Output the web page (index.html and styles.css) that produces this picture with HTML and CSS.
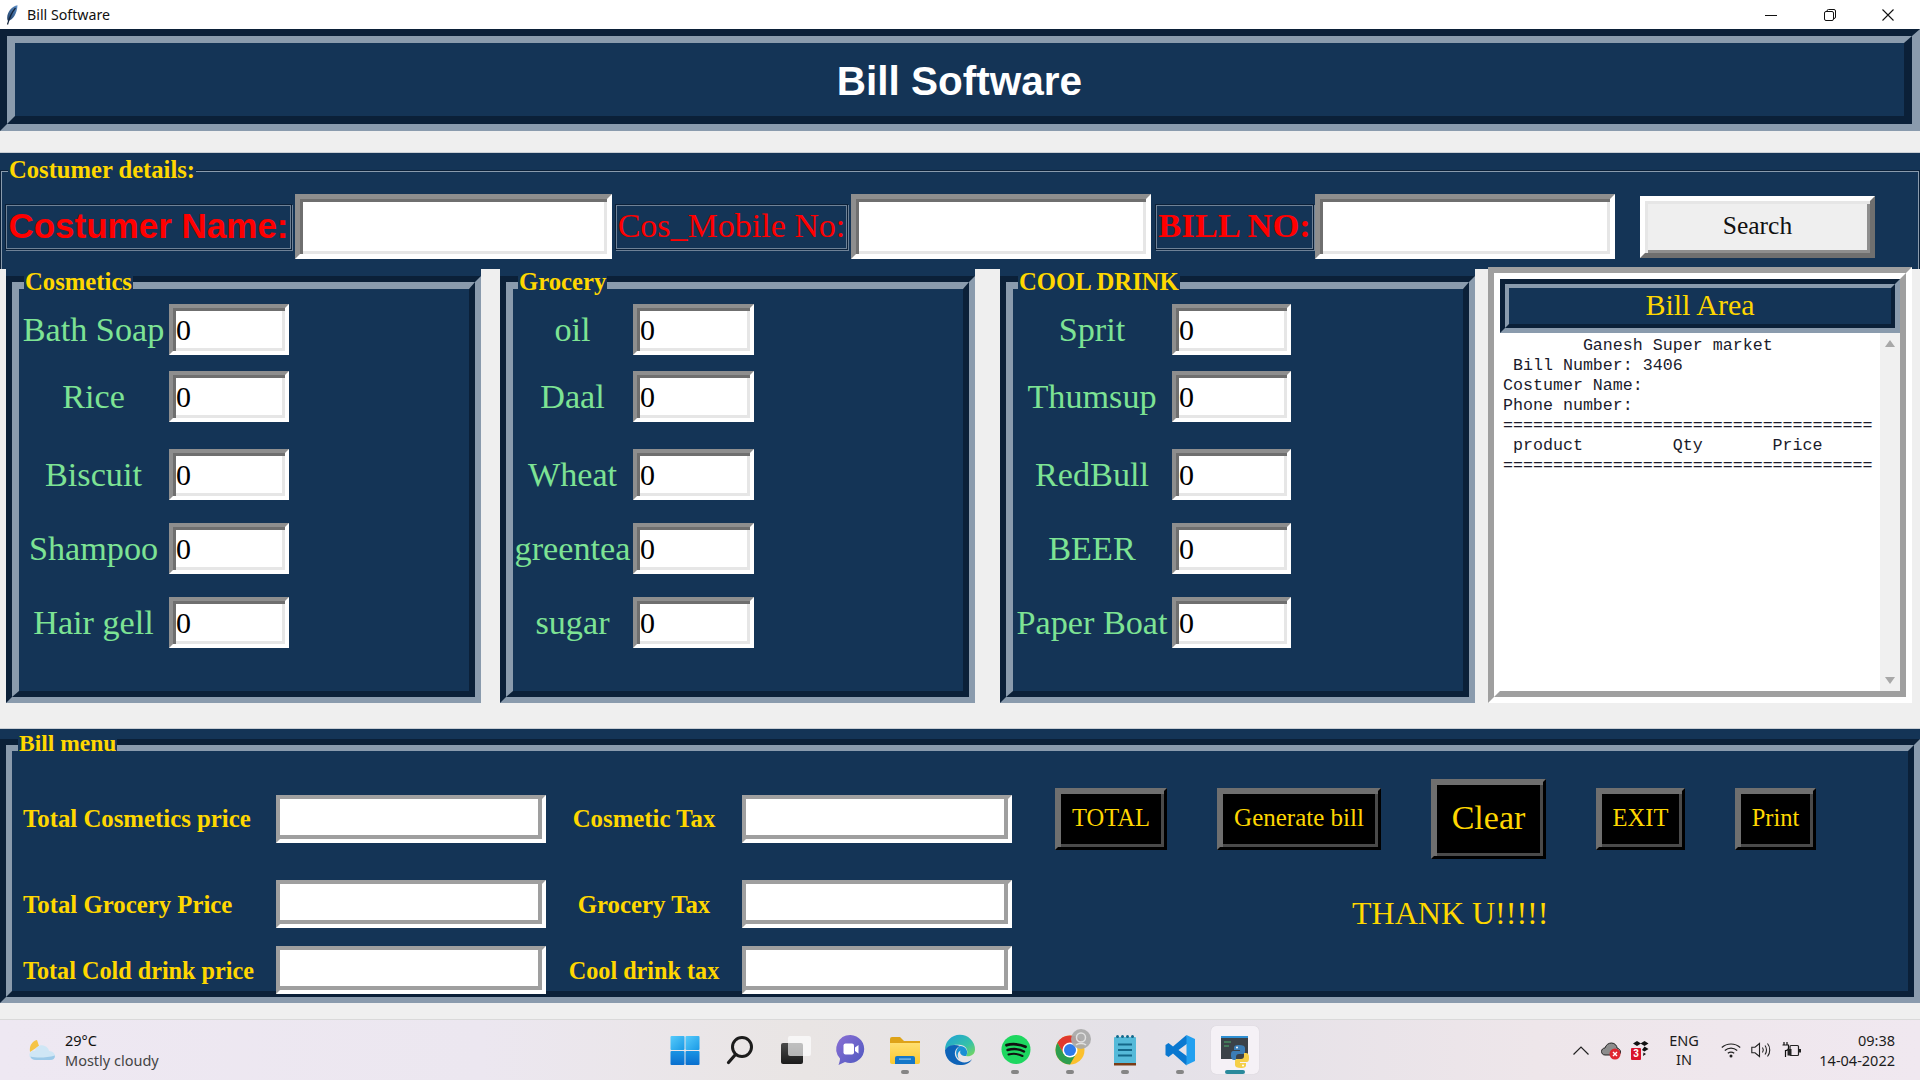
FILE: index.html
```html
<!DOCTYPE html>
<html lang="en">
<head>
<meta charset="utf-8">
<title>Bill Software</title>
<link rel="stylesheet" href="styles.css">
</head>
<body>
<div class="screen">
  <div class="titlebar">
    <div class="title-left">
      <svg class="feather" width="12" height="20" viewBox="0 0 12 20"><defs><linearGradient id="fe" x1="1" y1="0" x2="0" y2="1"><stop offset="0" stop-color="#5d8fc9"/><stop offset="1" stop-color="#1f3f66"/></linearGradient></defs><path d="M11.500 0.300C6 1.500 1.500 6.500 1.200 12.500C1.100 14 1.500 15.500 2.200 16C7 15 11 9 11.500 0.300Z" fill="url(#fe)"/><path d="M9.500 3C6 7 3.500 12 1.500 19.500" stroke="#14243a" stroke-width="1.200" fill="none"/></svg>
      <span class="title-text">Bill Software</span>
    </div>
    <div class="win-controls">
      <svg width="12" height="12" viewBox="0 0 12 12"><path d="M0 6.500H12" stroke="#111" stroke-width="1"/></svg>
      <svg width="12" height="12" viewBox="0 0 12 12"><rect x="0.500" y="2.500" width="9" height="9" rx="1.500" fill="none" stroke="#111"/><path d="M3 2.500V2A1.500 1.500 0 0 1 4.500 .5H10A1.500 1.500 0 0 1 11.500 2V8A1.500 1.500 0 0 1 10 9.500" fill="none" stroke="#111"/></svg>
      <svg width="12" height="12" viewBox="0 0 12 12"><path d="M0.500 0.500L11.500 11.500M11.500 0.500L0.500 11.500" stroke="#111" stroke-width="1.100"/></svg>
    </div>
  </div>

  <header class="groove header">
    <div class="groove-in header-in"><h1 class="app-title">Bill Software</h1></div>
  </header>

  <div class="gray-gap"></div>

  <section class="customer">
    <div class="customer-frame">
      <span class="legend legend-customer">Costumer details:</span>
      <div class="customer-row">
        <label class="cust-label cust-name">Costumer Name:</label>
        <input class="cust-input cust-input-1" type="text">
        <label class="cust-label cust-mobile">Cos_Mobile No:</label>
        <input class="cust-input cust-input-2" type="text">
        <label class="cust-label cust-bill">BILL NO:</label>
        <input class="cust-input cust-input-3" type="text">
        <button class="search-btn">Search</button>
      </div>
    </div>
  </section>

  <section class="products">
    <div class="product-frame pf-cosmetics">
      <span class="legend legend-frame">Cosmetics</span>
      <div class="groove"><div class="groove-in frame-in">
        <div class="item-grid grid-cosmetics">
          <label class="item-label">Bath Soap</label><input class="item-entry" value="0">
          <label class="item-label">Rice</label><input class="item-entry" value="0">
          <label class="item-label">Biscuit</label><input class="item-entry" value="0">
          <label class="item-label">Shampoo</label><input class="item-entry" value="0">
          <label class="item-label">Hair gell</label><input class="item-entry" value="0">
        </div>
      </div></div>
    </div>
    <div class="product-frame pf-grocery">
      <span class="legend legend-frame">Grocery</span>
      <div class="groove"><div class="groove-in frame-in">
        <div class="item-grid grid-grocery">
          <label class="item-label">oil</label><input class="item-entry" value="0">
          <label class="item-label">Daal</label><input class="item-entry" value="0">
          <label class="item-label">Wheat</label><input class="item-entry" value="0">
          <label class="item-label">greentea</label><input class="item-entry" value="0">
          <label class="item-label">sugar</label><input class="item-entry" value="0">
        </div>
      </div></div>
    </div>
    <div class="product-frame pf-drink">
      <span class="legend legend-frame">COOL DRINK</span>
      <div class="groove"><div class="groove-in frame-in">
        <div class="item-grid grid-drink">
          <label class="item-label">Sprit</label><input class="item-entry" value="0">
          <label class="item-label">Thumsup</label><input class="item-entry" value="0">
          <label class="item-label">RedBull</label><input class="item-entry" value="0">
          <label class="item-label">BEER</label><input class="item-entry" value="0">
          <label class="item-label">Paper Boat</label><input class="item-entry" value="0">
        </div>
      </div></div>
    </div>
    <div class="bill-frame">
      <div class="bill-frame-in">
        <div class="bill-head"><div class="bill-head-in">Bill Area</div></div>
        <div class="bill-body">
<pre class="bill-text">        Ganesh Super market
 Bill Number: 3406
Costumer Name:
Phone number:
=====================================
 product         Qty       Price
=====================================</pre>
          <div class="scrollbar">
            <svg width="10" height="8" viewBox="0 0 10 8"><path d="M5 0L10 7H0Z" fill="#a8a8a8"/></svg>
            <svg width="10" height="8" viewBox="0 0 10 8"><path d="M0 1H10L5 8Z" fill="#a8a8a8"/></svg>
          </div>
        </div>
      </div>
    </div>
  </section>

  <section class="menu">
    <span class="legend legend-menu">Bill menu</span>
    <div class="groove"><div class="groove-in menu-in">
      <div class="totals">
        <label class="total-label">Total Cosmetics price</label><input class="total-entry" type="text">
        <label class="tax-label">Cosmetic Tax</label><input class="total-entry" type="text">
        <label class="total-label low">Total Grocery Price</label><input class="total-entry" type="text">
        <label class="tax-label low">Grocery Tax</label><input class="total-entry" type="text">
        <label class="total-label low cold">Total Cold drink price</label><input class="total-entry" type="text">
        <label class="tax-label low cold">Cool drink tax</label><input class="total-entry" type="text">
      </div>
      <div class="actions">
        <div class="action-row">
          <button class="action action-total">TOTAL</button>
          <button class="action action-generate">Generate bill</button>
          <button class="action action-clear">Clear</button>
          <button class="action action-exit">EXIT</button>
          <button class="action action-print">Print</button>
        </div>
        <div class="thanks">THANK U!!!!!</div>
      </div>
    </div></div>
  </section>

  <div class="gray-foot"></div>

  <footer class="taskbar">
    <div class="weather">
      <svg class="weather-icon" width="28" height="24" viewBox="0 0 28 24"><path d="M2 14C1 8 4 3 9 2L11 8Z" fill="#f6c445"/><path d="M8 22C3 22 1 19 1.500 16C2 13.500 5 12 7 13C8 8 13 6 17 8C20 9.500 21 12 21 13C25 13 27 16 27 18C27 20.500 25 22 22 22Z" fill="#cfe6f5"/><path d="M8 22C5 22 3 20.500 2.500 18.500C8 20 18 20 27 17.500C27 20.500 25 22 22 22Z" fill="#9cc9e8"/></svg>
      <div class="weather-text">
        <span class="temp">29°C</span>
        <span class="cond">Mostly cloudy</span>
      </div>
    </div>
    <div class="apps">
      <div class="app">
        <svg width="40" height="40" viewBox="0 0 40 40"><defs><linearGradient id="w1" x1="0" y1="0" x2="1" y2="1"><stop offset="0" stop-color="#57cbfb"/><stop offset="1" stop-color="#1a9ae6"/></linearGradient><linearGradient id="w2" x1="0" y1="0" x2="0" y2="1"><stop offset="0" stop-color="#1994e4"/><stop offset="1" stop-color="#0a6fce"/></linearGradient></defs><rect x="5.500" y="6" width="14" height="14" rx="1" fill="url(#w1)"/><rect x="20.500" y="6" width="14" height="14" rx="1" fill="url(#w1)"/><rect x="5.500" y="21" width="14" height="14" rx="1" fill="url(#w2)"/><rect x="20.500" y="21" width="14" height="14" rx="1" fill="url(#w2)"/></svg>
      </div>
      <div class="app">
        <svg width="40" height="40" viewBox="0 0 40 40"><circle cx="22" cy="17" r="9.500" fill="none" stroke="#1c1c1c" stroke-width="3"/><path d="M15.500 24.500L8.500 32.500" stroke="#1c1c1c" stroke-width="3.200" stroke-linecap="round"/></svg>
      </div>
      <div class="app">
        <svg width="40" height="40" viewBox="0 0 40 40"><defs><linearGradient id="t1" x1="0" y1="0" x2="0" y2="1"><stop offset="0" stop-color="#4a4a4a"/><stop offset="1" stop-color="#1b1b1b"/></linearGradient></defs><rect x="6" y="13" width="22" height="21" rx="2" fill="url(#t1)"/><rect x="13" y="6" width="23" height="20" rx="2" fill="#fff" fill-opacity=".65"/></svg>
      </div>
      <div class="app">
        <svg width="40" height="40" viewBox="0 0 40 40"><defs><linearGradient id="c1" x1="0" y1="0" x2="1" y2="1"><stop offset="0" stop-color="#8a6fd4"/><stop offset="1" stop-color="#4e58c0"/></linearGradient></defs><path d="M20.500 5A14 14 0 1 1 15 32L8.500 35C9.500 32 10 30 10 28.500A14 14 0 0 1 20.500 5Z" fill="url(#c1)"/><rect x="13.500" y="13.500" width="10.500" height="11" rx="2" fill="#fff"/><path d="M25 17.500L28.500 15V23.500L25 21Z" fill="#fff"/></svg>
      </div>
      <div class="app">
        <svg width="40" height="40" viewBox="0 0 40 40"><defs><linearGradient id="f1" x1="0" y1="0" x2="0" y2="1"><stop offset="0" stop-color="#ffdf70"/><stop offset="1" stop-color="#fbc92f"/></linearGradient></defs><path d="M5 9A2 2 0 0 1 7 7H15L19 11H35V16H5Z" fill="#dea318"/><path d="M5 13H35V32A2 2 0 0 1 33 34H7A2 2 0 0 1 5 32Z" fill="url(#f1)"/><path d="M10 28A2 2 0 0 1 12 26H28A2 2 0 0 1 30 28V34H10Z" fill="#1477c8"/><rect x="14" y="28.500" width="12" height="1.200" fill="#8cc6ee"/></svg>
        <span class="running"></span>
      </div>
      <div class="app">
        <svg width="40" height="40" viewBox="0 0 40 40"><defs><linearGradient id="e1" x1="0" y1="0" x2="1" y2="1"><stop offset="0" stop-color="#1ea0d8"/><stop offset=".6" stop-color="#35c1a8"/><stop offset="1" stop-color="#7ed957"/></linearGradient></defs><path d="M5 20A15 15 0 0 1 35 19.500C35 25 30 27 26 26C29 22 27 16 21 15C14 14 8 16 5 20Z" fill="url(#e1)"/><path d="M5 20C8 15 14 14 20 16C15 18 13 24 17 29C21 34 29 33 32 29C30 33 26 35 20 35C11 35 5 28 5 20Z" fill="#0e63b8"/><path d="M20 16C26 16 29 22 26 26C22 26 19 24 20.500 20.500C17.500 22 17 26 19 29C15 26 15 19 20 16Z" fill="#1a8fd4"/></svg>
      </div>
      <div class="app">
        <svg width="40" height="40" viewBox="0 0 40 40"><circle cx="21" cy="19.500" r="14.500" fill="#1ed760"/><path d="M11.500 15.200C17 13.500 25 14 30.500 16.800" fill="none" stroke="#111" stroke-width="2.800" stroke-linecap="round"/><path d="M12.500 20C17.500 18.700 24.500 19 29 21.500" fill="none" stroke="#111" stroke-width="2.400" stroke-linecap="round"/><path d="M13.500 24.500C18 23.500 23.500 23.800 27.500 26" fill="none" stroke="#111" stroke-width="2" stroke-linecap="round"/></svg>
        <span class="running"></span>
      </div>
      <div class="app">
        <svg width="40" height="40" viewBox="0 0 40 40"><circle cx="20" cy="20" r="14.500" fill="#fbc02d"/><path d="M20 5.500A14.500 14.500 0 0 0 7.400 12.800L13.500 23.500L20 13H32.600A14.500 14.500 0 0 0 20 5.500Z" fill="#e0382e"/><path d="M7.400 12.800A14.500 14.500 0 0 0 20 34.500L26 24L13.500 23.500Z" fill="#2e9e4f"/><circle cx="20" cy="20" r="7.500" fill="#fff"/><circle cx="20" cy="20" r="6" fill="#2f7bea"/><circle cx="31" cy="9" r="10" fill="#a9a9a9" fill-opacity=".92"/><circle cx="31" cy="7.500" r="4.500" fill="none" stroke="#e0e0e0" stroke-width="1.500"/><path d="M26 15C28 13 34 13 36 15" fill="none" stroke="#e0e0e0" stroke-width="1.500"/></svg>
        <span class="running"></span>
      </div>
      <div class="app">
        <svg width="40" height="40" viewBox="0 0 40 40"><rect x="9" y="7" width="22" height="26.500" rx="1" fill="#55bad9"/><rect x="9" y="33" width="22" height="2.500" fill="#7a3c16"/><g fill="#14688a"><circle cx="12.500" cy="6.500" r="1.500"/><circle cx="17.500" cy="6.500" r="1.500"/><circle cx="22.500" cy="6.500" r="1.500"/><circle cx="27.500" cy="6.500" r="1.500"/><rect x="13" y="13.500" width="14" height="2"/><rect x="13" y="19" width="14" height="2"/><rect x="13" y="24.500" width="14" height="2"/></g></svg>
        <span class="running"></span>
      </div>
      <div class="app">
        <svg width="40" height="40" viewBox="0 0 40 40"><path d="M13 16.500L8.500 13L5.500 15V25L8.500 27L13 23.500L26.500 35.500L28 27L18.500 20L28 13L26.500 5Z" fill="#0a78d0"/><path d="M26.500 5L35 9V31L26.500 35Z" fill="#22a0f0"/></svg>
        <span class="running"></span>
      </div>
      <div class="app app-active">
        <svg width="40" height="40" viewBox="0 0 40 40"><rect x="6" y="6" width="27" height="23" fill="#3b4248"/><rect x="6" y="6" width="27" height="2" fill="#2f8fd3"/><path d="M9 12H16M9 16H14" stroke="#4caf6a" stroke-width="1"/><path d="M24 15C20 15 19 16 19 18V20H25V21H18C16 21 16 24 16 26C16 28 17 30 19 30H21V27C21 25 22 24 24 24H28C30 24 30 23 30 21V18C30 16 28 15 24 15Z" fill="#3b7db5"/><circle cx="22" cy="17.500" r="1" fill="#fff"/><path d="M26 38C30 38 31 37 31 35V33H25V32H32C34 32 34 29 34 27C34 25 33 23 31 23H29V26C29 28 28 29 26 29H22C20 29 20 30 20 32V35C20 37 22 38 26 38Z" fill="#f5cf47"/><circle cx="28" cy="35.500" r="1" fill="#fff"/></svg>
        <span class="running running-active"></span>
      </div>
    </div>
    <div class="tray">
      <svg class="t-chevron" width="16" height="9" viewBox="0 0 16 9"><path d="M0.500 8.500L8 1L15.500 8.500" fill="none" stroke="#222" stroke-width="1.200"/></svg>
      <svg class="t-cloud" width="20" height="19" viewBox="0 0 20 19"><path d="M4 14C1.500 14 .5 12 .5 10.500C.5 8.500 2 7 4 7C5 3.500 8 2 10.500 2C14 2 16 5 16 7C18 7.500 19.500 9 19.500 11C19.500 13 18 14 16 14Z" fill="#8c8c8c" stroke="#222" stroke-width="1"/><circle cx="14" cy="13" r="5.500" fill="#e0262f"/><path d="M12 11L16 15M16 11L12 15" stroke="#fff" stroke-width="1.400"/></svg>
      <div class="t-box">
        <svg width="19" height="19" viewBox="0 0 19 19"><path d="M6 0L10 2.500L6 5L2 2.500ZM13.500 0L17.500 2.500L13.500 5L9.500 2.500ZM13.500 5.500L17.500 8L13.500 10.500L11 9ZM12.500 11.500L15 13L12 15Z" fill="#111"/></svg>
        <span class="badge-3">3</span>
      </div>
      <div class="t-lang"><span>ENG</span><span>IN</span></div>
      <svg class="t-wifi" width="20" height="16" viewBox="0 0 20 16"><path d="M.8 5.500C6 .8 14 .8 19.200 5.500M3.800 8.500C7.500 5.300 12.500 5.300 16.200 8.500M6.800 11.300C8.800 9.800 11.200 9.800 13.200 11.300" fill="none" stroke="#222" stroke-width="1.200"/><circle cx="10" cy="14" r="1.500" fill="#222"/></svg>
      <svg class="t-vol" width="20" height="16" viewBox="0 0 20 16"><path d="M.8 5.200H4L8.500 1.500V14.500L4 10.800H.8Z" fill="none" stroke="#222" stroke-width="1.100"/><path d="M11.500 5.500C12.500 7 12.500 9 11.500 10.500M14 3.500C16 6 16 10 14 12.500M16.500 1.500C19.500 5 19.500 11 16.500 14.500" fill="none" stroke="#222" stroke-width="1.100"/></svg>
      <svg class="t-batt" width="19" height="16" viewBox="0 0 19 16"><path d="M2 0V3M5 0V3M.5 3H6.500V6C6.500 7.500 5 8.500 3.500 8.500V15" fill="none" stroke="#111" stroke-width="1.200"/><rect x="8" y="3.500" width="8.500" height="10" rx="1" fill="none" stroke="#222" stroke-width="1.200"/><rect x="5.500" y="7" width="4" height="6.500" fill="#222"/><rect x="17" y="7" width="2" height="3.500" fill="#222"/></svg>
      <div class="t-clock"><span>09:38</span><span>14-04-2022</span></div>
    </div>
  </footer>
</div>
</body>
</html>
```

FILE: styles.css
```css
* { box-sizing: border-box; }
html, body { margin: 0; padding: 0; }
body { width: 1920px; height: 1080px; overflow: hidden; background: #efefef; font-family: "Liberation Serif", serif; }
.screen { width: 1920px; height: 1080px; display: flex; flex-direction: column; }

.titlebar { height: 29px; background: #fff; display: flex; justify-content: space-between; align-items: center; }
.title-left { display: flex; align-items: center; padding-left: 6px; }
.feather { margin-right: 9px; }
.title-text { font-family: "Noto Sans", sans-serif; font-size: 14.200px; color: #111; }
.win-controls { display: flex; gap: 46.500px; padding-right: 26px; }

.groove { border: 6px solid; border-color: #0b2038 #8a9bad #8a9bad #0b2038; }
.groove-in { border: 6px solid; border-color: #8a9bad #0b2038 #0b2038 #8a9bad; background: #143456; height: 100%; }

.header { height: 102px; border-width: 7px 8px 7px 7px; }
.header-in { border-width: 7px 8px 8px 8px; padding-top: 3px; display: flex; align-items: center; justify-content: center; }
.app-title { margin: 0; font-family: "Liberation Sans", sans-serif; font-weight: 700; font-size: 40.500px; color: #fff; }

.gray-gap { height: 22px; background: #efefef; border-bottom: 1px solid #c9ced4; }

.legend { position: absolute; background: #143456; color: #ffd700; font-weight: 700; font-size: 24.700px; line-height: 24px; padding: 0 1px; white-space: nowrap; z-index: 2; }

.customer { height: 116px; background: #143456; padding-top: 17px; }
.customer-frame { position: relative; height: 99px; border: 1px solid #0b2038; border-bottom: 0; box-shadow: inset 1px 1px 0 #8a9bad, inset -1px 0 0 #8a9bad; }
.legend-customer { left: 7px; top: -13px; font-size: 24.600px; }
.customer-row { display: flex; align-items: center; padding: 23px 0 0 4px; }
.cust-label { height: 46px; border: 1px solid #0b2038; box-shadow: inset 1px 1px 0 #6f8297, inset -1px -1px 0 #6f8297, 1px 1px 0 #6f8297; color: #f00; font-size: 34px; padding-bottom: 2px; display: flex; align-items: center; justify-content: center; white-space: nowrap; }
.cust-name { width: 287px; font-family: "Liberation Sans", sans-serif; font-weight: 700; font-size: 35px; margin-right: 3px; }
.cust-mobile { width: 233px; margin: 0 3px; }
.cust-bill { width: 159px; font-weight: 700; font-size: 34.500px; margin: 0 1px 0 4px; }
.cust-input { height: 65px; border: 5px solid; border-color: #8e8e8e #fff #fff #8e8e8e; box-shadow: inset 3px 3px 0 #6f6f6f, inset -3px -3px 0 #e6e6e6; background: #fff; padding: 0 8px; outline: none; border-radius: 0; }
.cust-input-1 { width: 317px; }
.cust-input-2 { width: 300px; }
.cust-input-3 { width: 300px; }
.search-btn { width: 235px; height: 62px; margin-left: 25px; background: #efefef; border: 5px solid; border-color: #fff #6f6f6f #6f6f6f #fff; box-shadow: inset 3px 3px 0 #e6e6e6, inset -3px -3px 0 #8e8e8e; font-family: "Liberation Serif", serif; font-size: 25.500px; color: #111; padding: 0 0 2px; border-radius: 0; }

.products { height: 459px; background: #efefef; padding-bottom: 25px; display: flex; padding-left: 6px; }
.product-frame { position: relative; width: 475px; height: 434px; background: #143456; padding-top: 7px; }
.product-frame > .groove { height: 427px; }
.pf-grocery { margin-left: 19px; }
.pf-drink { margin-left: 25px; }
.legend-frame { left: 18px; top: 1px; }
.frame-in { padding-top: 15px; border-width: 7px 6px 6px 7px; }
.item-grid { display: grid; grid-template-rows: 67px 78px 74px 74px 51px; align-items: start; }
.grid-cosmetics { grid-template-columns: 150px 120px; }
.grid-grocery { grid-template-columns: 120px 121px; }
.grid-drink { grid-template-columns: 159px 119px; }
.item-label { color: #7de394; font-size: 34.200px; line-height: 51px; height: 51px; text-align: center; white-space: nowrap; padding-right: 1px; }
.item-entry { width: 100%; height: 51px; border: 4px solid; border-color: #8e8e8e #fff #fff #8e8e8e; box-shadow: inset 3px 3px 0 #6f6f6f, inset -3px -3px 0 #e6e6e6; background: #fff; font-family: "Liberation Serif", serif; font-size: 30px; color: #000; padding: 0 0 0 3px; outline: none; border-radius: 0; }

.bill-frame { width: 424px; height: 436px; margin: -2px 0 0 13px; border: 6px solid; border-color: #9f9f9f #fff #fff #9f9f9f; position: relative; z-index: 1; }
.bill-frame-in { height: 100%; border: 6px solid; border-color: #fff #9f9f9f #9f9f9f #fff; display: flex; flex-direction: column; }
.bill-head { height: 54px; border: 5px solid; border-color: #0b2038 #8a9bad #8a9bad #0b2038; }
.bill-head-in { height: 100%; border: 4px solid; border-color: #8a9bad #0b2038 #0b2038 #8a9bad; background: #143456; color: #ffd700; font-size: 30px; padding-bottom: 2px; display: flex; align-items: center; justify-content: center; }
.bill-body { flex: 1; display: flex; background: #fff; }
.bill-text { flex: 1; margin: 0; padding: 3px 0 0 3px; font-family: "Liberation Mono", monospace; font-size: 16.650px; line-height: 20px; color: #1b1b2b; overflow: hidden; }
.scrollbar { width: 20px; background: #f0f0f0; display: flex; flex-direction: column; justify-content: space-between; align-items: center; padding: 7px 0; }

.menu { position: relative; height: 275px; background: #143456; padding-top: 10px; border-top: 1px solid #c9ced4; }
.menu > .groove { height: 264px; }
.legend-menu { left: 18px; top: 2px; font-size: 23.500px; }
.menu-in { display: flex; }
.totals { display: grid; grid-template-columns: 264px 270px 196px 270px; grid-template-rows: 85px 66px 48px; align-items: start; padding-top: 44px; }
.total-label, .tax-label { font-weight: 700; font-size: 24.800px; line-height: 47px; color: #ffd700; white-space: nowrap; }
.low { line-height: 49px; }
.cold { font-size: 24.200px; }
.total-label { padding-left: 11px; }
.tax-label { text-align: center; }
.total-entry { width: 270px; height: 48px; border: 4px solid; border-color: #9f9f9f #fff #fff #9f9f9f; box-shadow: inset -4px -4px 0 #9f9f9f; background: #fff; outline: none; border-radius: 0; padding: 0 6px; }

.actions { padding: 28px 0 0 43px; }
.action-row { display: flex; align-items: center; gap: 50px; height: 80px; }
.action { background: #000; color: #ffd700; font-family: "Liberation Serif", serif; font-size: 24.500px; height: 62px; padding: 0 0 3px; border: 3px solid; border-color: #6f6f6f #000 #000 #6f6f6f; box-shadow: inset 3px 3px 0 #6f6f6f, inset -3px -3px 0 #4a4a4a; border-radius: 0; }
.action-total { width: 112px; }
.action-generate { width: 164px; font-size: 25px; }
.action-clear { width: 115px; height: 80px; font-size: 34px; }
.action-exit { width: 89px; }
.action-print { width: 81px; }
.thanks { margin: 34px 0 0 297px; color: #ffd700; font-size: 32px; line-height: 40px; white-space: nowrap; }

.gray-foot { height: 17px; background: #efefef; border-bottom: 1px solid #d9d9d9; }

.taskbar { height: 60px; display: grid; grid-template-columns: 1fr auto 1fr; background: linear-gradient(90deg, #eee8f2 0%, #ece7f0 25%, #e9e5e4 42%, #e4e1e8 60%, #eee6ea 80%, #f0e8f0 100%); font-family: "Noto Sans", sans-serif; color: #1c1c1c; }
.weather { display: flex; align-items: center; padding-left: 28px; }
.weather-icon { margin-right: 9px; }
.weather-text { display: flex; flex-direction: column; font-size: 14.500px; line-height: 20px; }
.temp { color: #111; }
.cond { color: #444; }
.apps { display: flex; }
.app { position: relative; width: 55px; height: 60px; display: flex; align-items: center; justify-content: center; }
.app-active::before { content: ""; position: absolute; left: 3.500px; top: 6px; width: 48px; height: 48px; background: #f5f1f6; border-radius: 5px; box-shadow: 0 0 1px rgba(0,0,0,.15); }
.app > svg { position: relative; overflow: visible; }
.running { position: absolute; left: 23.500px; top: 50px; width: 8px; height: 4px; border-radius: 2px; background: #858585; }
.running-active { left: 17.500px; width: 20px; background: #2a8a9c; }
.tray { display: flex; align-items: center; padding: 0 25px 0 310.500px; font-size: 14.500px; }
.t-cloud { margin-left: 12px; }
.t-box { position: relative; margin-left: 10px; width: 19px; height: 19px; }
.badge-3 { position: absolute; left: 0; bottom: 0; width: 10px; height: 12px; background: #d9122c; color: #fff; font-family: "Liberation Sans", sans-serif; font-weight: 700; font-size: 10px; line-height: 12px; text-align: center; border-radius: 1px; }
.t-lang { display: flex; flex-direction: column; align-items: center; width: 28px; margin-left: 20px; line-height: 19px; }
.t-wifi { margin-left: 23px; }
.t-vol { margin-left: 10px; }
.t-batt { margin-left: 11px; }
.t-clock { margin-left: auto; display: flex; flex-direction: column; align-items: flex-end; line-height: 20px; }
```
